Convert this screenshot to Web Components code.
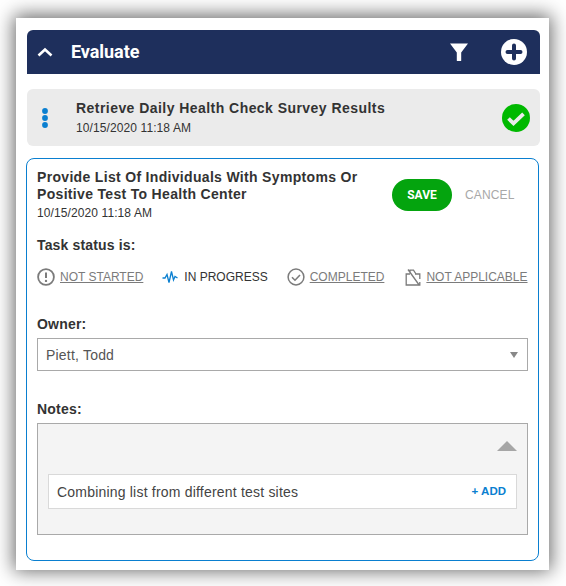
<!DOCTYPE html>
<html lang="en">
<head>
<meta charset="utf-8">
<title>Evaluate</title>
<style>
html,body{margin:0;padding:0;background:#fff;font-family:"Liberation Sans",Arial,sans-serif}
body{box-sizing:border-box;height:586px;padding:18px 0 0 16px;overflow:hidden}
</style>
</head>
<body>
<eval-panel>
  <section-header title-text="Evaluate"></section-header>
  <task-row title-text="Retrieve Daily Health Check Survey Results" date="10/15/2020 11:18 AM"></task-row>
  <task-card>
    <span slot="title">Provide List Of Individuals With Symptoms Or Positive Test To Health Center</span>
    <span slot="date">10/15/2020 11:18 AM</span>
    <status-picker></status-picker>
    <field-block label="Owner:" gap="28"><owner-select value="Piett, Todd"></owner-select></field-block>
    <field-block label="Notes:" gap="29"><notes-box value="Combining list from different test sites"></notes-box></field-block>
  </task-card>
</eval-panel>
<script>
function def(name, html){
  customElements.define(name, class extends HTMLElement{
    connectedCallback(){
      if(this.shadowRoot) return;
      const r=this.attachShadow({mode:'open'});
      r.innerHTML=typeof html==='function'?html(this):html;
    }
  });
}
def('eval-panel',`<style>
:host{display:block;box-sizing:border-box;width:533px;height:552px;padding:12px 9px 0 11px;background:#fff;
box-shadow:0 -1px 18px 2px rgba(0,0,0,.6);font-family:"Liberation Sans",Arial,sans-serif}
</style><slot></slot>`);
def('section-header',h=>`<style>
:host{display:flex;align-items:center;height:44px;background:#1e2f5c;color:#fff;border-radius:6px 6px 0 0}
.chev{margin-left:10px;width:16px;height:10px;display:block}
h1{margin:0 0 0 18px;font:700 18px/22px Roboto,"Liberation Sans",sans-serif;flex:1;letter-spacing:-.05px}
.f{display:block;width:18px;height:18px;margin-right:33px}
.p{display:block;width:26px;height:26px;margin-right:13px}
</style>
<svg class="chev" viewBox="0 0 16 10"><path d="M1.5 8.5 8 2.5l6.5 6" fill="none" stroke="#fff" stroke-width="2.6"/></svg>
<h1>${h.getAttribute('title-text')}</h1>
<svg class="f" viewBox="0 0 18 18"><path d="M0 .5h18L11.2 9.6V17.5a.5.5 0 0 1-.5.5H7.3a.5.5 0 0 1-.5-.5V9.6z" fill="#fff"/></svg>
<svg class="p" viewBox="0 0 26 26"><circle cx="13" cy="13" r="13" fill="#fff"/><path d="M13 6.5v13M6.5 13h13" stroke="#1e2f5c" stroke-width="4" stroke-linecap="round"/></svg>`);
def('task-row',h=>`<style>
:host{display:flex;align-items:center;height:57px;margin-top:15px;background:#ebebeb;border-radius:6px;color:#333}
.dots{display:block;width:6px;height:20px;margin-left:15px;flex:none}
.t{flex:1;margin-left:28px}
.a{font:700 14px/18px "Liberation Sans",sans-serif;letter-spacing:.45px}
.b{font:12px/15px "Liberation Sans",sans-serif;margin-top:4px;letter-spacing:.1px}
.c{display:block;width:28px;height:28px;margin-right:10px}
</style>
<svg class="dots" viewBox="0 0 6 20"><circle cx="3" cy="3" r="2.9" fill="#0a7fd0"/><circle cx="3" cy="10" r="2.9" fill="#0a7fd0"/><circle cx="3" cy="17" r="2.9" fill="#0a7fd0"/></svg>
<div class="t"><div class="a">${h.getAttribute('title-text')}</div><div class="b">${h.getAttribute('date')}</div></div>
<svg class="c" viewBox="0 0 28 28"><circle cx="14" cy="14" r="14" fill="#00b900"/><path d="M6.5 14.5l5 4.8L21.5 9.8" fill="none" stroke="#ebebeb" stroke-width="3.8"/></svg>`);
def('task-card',`<style>
:host{display:block;box-sizing:border-box;width:513px;height:403px;margin:12px 0 0 -1px;padding:10px 10px 0 10px;border:1px solid #0a7fd0;border-radius:8px;color:#333}
.top{display:flex;align-items:flex-start}
.txt{flex:1;min-width:0}
.a{width:335px;font:700 14px/17px "Liberation Sans",sans-serif;letter-spacing:.32px;color:#333}
.b{font:12px/15px "Liberation Sans",sans-serif;margin-top:3px;letter-spacing:.1px}
.save{box-sizing:border-box;width:60px;height:32px;margin-top:10px;border-radius:16px;background:#04a40e;color:#fff;font:700 12px/32px Roboto,"Open Sans",sans-serif;text-align:center}
.cancel{width:61px;margin:10px 2px 0 13px;font:12px/32px "Liberation Sans",sans-serif;color:#a8a8a8;text-align:left;white-space:nowrap;letter-spacing:.15px}
</style>
<div class="top"><div class="txt"><div class="a"><slot name="title"></slot></div><div class="b"><slot name="date"></slot></div></div>
<div class="save">SAVE</div><div class="cancel">CANCEL</div></div>
<slot></slot>`);
const gray='#7b7b7b';
def('status-picker',`<style>
:host{display:block;margin-top:15px}
.l{font:700 14px/18px "Liberation Sans",sans-serif;letter-spacing:.15px;color:#333}
.r{display:flex;gap:19px;align-items:center;height:20px;margin-top:13px;font:12px/20px "Liberation Sans",sans-serif;color:#7b7b7b;white-space:nowrap}
.i{display:flex;align-items:center;gap:5px}
.i span{text-decoration:underline}
.i.on{color:#333}.i.on span{text-decoration:none}
svg{display:block;flex:none}
</style>
<div class="l">Task status is:</div>
<div class="r">
<div class="i"><svg width="18" height="18" viewBox="0 0 18 18"><circle cx="9" cy="9" r="7.9" fill="none" stroke="${gray}" stroke-width="1.8"/><path d="M9 4.4v5.6" stroke="${gray}" stroke-width="2"/><circle cx="9" cy="12.9" r="1.2" fill="${gray}"/></svg><span>NOT STARTED</span></div>
<div class="i on" style="gap:6px"><svg width="16" height="14" viewBox="0 0 16 14"><path d="M.5 8H3L5 4.5 7 12.5 9.5 1.5 11.5 10 13 6.5l2.5 1.5" fill="none" stroke="#0a7fd0" stroke-width="1.3"/></svg><span>IN PROGRESS</span></div>
<div class="i"><svg width="18" height="18" viewBox="0 0 18 18"><circle cx="9" cy="9" r="7.9" fill="none" stroke="${gray}" stroke-width="1.5"/><path d="M5 9.2l3 3 5-5.2" fill="none" stroke="${gray}" stroke-width="1.6"/></svg><span>COMPLETED</span></div>
<div class="i" style="gap:5px;margin-left:2px"><svg width="16" height="17" viewBox="0 0 16 17"><path d="M5 5H1.2v11H14.8V13M14.8 10V5H10M5 4V1.2H8.5L11 5M3 .5l11.5 16" fill="none" stroke="${gray}" stroke-width="1.3"/></svg><span>NOT APPLICABLE</span></div>
</div>`);
def('field-block',h=>`<style>
:host{display:block;margin-top:${h.getAttribute('gap')||38}px}
.l{font:700 14px/18px "Liberation Sans",sans-serif;letter-spacing:.2px;color:#333;margin-bottom:5px}
</style><div class="l">${h.getAttribute('label')}</div><slot></slot>`);
def('owner-select',h=>`<style>
:host{display:flex;align-items:center;box-sizing:border-box;width:491px;height:33px;border:1px solid #a9a9a9;padding:0 9px 0 8px;font:14px/20px "Liberation Sans",sans-serif;letter-spacing:.2px;color:#555;background:#fff}
span{flex:1}
i{width:0;height:0;border-left:4.5px solid transparent;border-right:4.5px solid transparent;border-top:6px solid #888;margin-top:1px}
</style><span>${h.getAttribute('value')}</span><i></i>`);
def('notes-box',h=>`<style>
:host{display:block;box-sizing:border-box;width:491px;height:112px;border:1px solid #a9a9a9;background:#f4f4f4;padding:17px 10px 0}
.tri{width:0;height:0;margin:0 0 0 auto;border-left:10px solid transparent;border-right:10px solid transparent;border-bottom:10px solid #a6a6a6}
.inp{display:flex;align-items:center;box-sizing:border-box;height:35px;margin-top:23px;padding:0 10px 0 8px;background:#fff;border:1px solid #d9d9d9;font:14px/20px "Liberation Sans",sans-serif;letter-spacing:.2px;color:#444}
.inp span{flex:1}
b{font:700 11.5px/16px "Liberation Sans",sans-serif;color:#0a7fd0;letter-spacing:0;margin-top:-1px}
</style><div class="tri"></div><div class="inp"><span>${h.getAttribute('value')}</span><b>+ ADD</b></div>`);
</script>
</body>
</html>
